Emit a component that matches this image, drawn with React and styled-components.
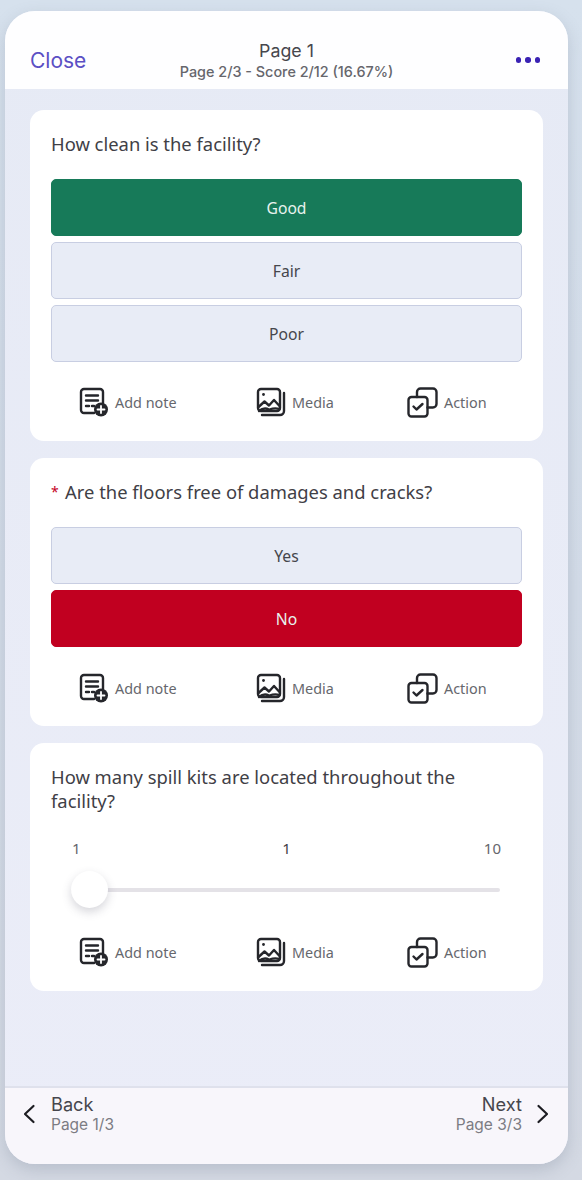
import React from "react";
import styled, { createGlobalStyle } from "styled-components";

const Global = createGlobalStyle`
  html, body { margin: 0; padding: 0; }
  body {
    width: 582px;
    height: 1180px;
    overflow: hidden;
    background: linear-gradient(180deg, #d6e1ed 0%, #d3dce8 50%, #d4d9e3 100%);
    font-family: "Noto Sans", "Open Sans", sans-serif;
  }
`;

const Screen = styled.div`
  box-sizing: border-box;
  width: 582px;
  height: 1180px;
  padding: 11px 14px 16px 5px;
`;
const Phone = styled.div`
  height: 100%;
  border-radius: 30px;
  overflow: hidden;
  display: flex;
  flex-direction: column;
  background: linear-gradient(180deg, #e6eaf5 0%, #ebedf8 100%);
  box-shadow: 0 6px 16px rgba(120, 130, 150, 0.3);
`;
const Header = styled.header`
  box-sizing: border-box;
  height: 78px;
  padding: 22px 25px 0;
  display: grid;
  grid-template-columns: 1fr auto 1fr;
  align-items: start;
  background: #fefeff;
  font-family: Inter, sans-serif;
`;
const Close = styled.span`
  font-size: 21px;
  line-height: 28px;
  margin-top: 14px;
  color: #5b4fc4;
`;
const HeadTitle = styled.div`
  text-align: center;
  margin-top: 8px;
`;
const PageName = styled.div`
  font-size: 17.8px;
  line-height: 20px;
  color: #47474d;
`;
const Score = styled.div`
  font-size: 14.4px;
  line-height: 16px;
  margin-top: 3px;
  font-weight: 500;
  color: #66666c;
`;
const Dots = styled.div`
  justify-self: end;
  display: flex;
  gap: 4px;
  margin-top: 24px;
  margin-right: 3px;
`;
const Dot = styled.i`
  width: 5.5px;
  height: 5.5px;
  border-radius: 50%;
  background: #3a22b4;
`;
const Content = styled.main`
  flex: 1;
  padding: 21px 25px 0;
  display: flex;
  flex-direction: column;
  gap: 17px;
`;
const Card = styled.section`
  box-sizing: border-box;
  height: ${(p) => p.$h}px;
  padding: 22px 21px 0;
  border-radius: 14px;
  background: #fff;
  display: flex;
  flex-direction: column;
`;
const Question = styled.div`
  font-size: 18.4px;
  line-height: 24px;
  height: ${(p) => p.$h || 25}px;
  margin-bottom: ${(p) => p.$gap || 22}px;
  color: #3f4046;
`;
const Star = styled.span`
  display: inline-block;
  width: 14px;
  font-size: 14px;
  vertical-align: 2px;
  color: #c5011f;
`;
const Options = styled.div`
  display: flex;
  flex-direction: column;
  gap: 6px;
`;
const Option = styled.div`
  box-sizing: border-box;
  height: 57px;
  border-radius: 5px;
  display: flex;
  align-items: center;
  justify-content: center;
  font-size: 15.7px;
  color: ${(p) => (p.$bg ? "#e8f3ee" : "#45464c")};
  background: ${(p) => p.$bg || "#e8ecf6"};
  border: 1px solid ${(p) => p.$bg || "#c8cee2"};
`;
const Actions = styled.div`
  display: grid;
  grid-template-columns: 177px 151px auto;
  padding-left: 28px;
  margin-top: ${(p) => p.$top || 22}px;
`;
const ActionItem = styled.div`
  display: flex;
  align-items: center;
  gap: 6px;
  height: 36px;
  font-size: 14.4px;
  color: #66676d;
  svg { flex: none; }
`;
const ScaleLabels = styled.div`
  display: grid;
  grid-template-columns: 1fr auto 1fr;
  padding: 0 21px;
  font-size: 15px;
  line-height: 20px;
  color: #65666c;
`;
const MaxLabel = styled.span`
  text-align: right;
`;
const MidLabel = styled.span`
  color: #3f4046;
`;
const Slider = styled.div`
  position: relative;
  height: 4px;
  margin: 30px 22px 0 20px;
  border-radius: 2px;
  background: #e4e2e7;
`;
const Thumb = styled.div`
  position: absolute;
  left: 0;
  top: -17px;
  width: 37px;
  height: 37px;
  border-radius: 50%;
  background: #fff;
  box-shadow: 0 4px 10px rgba(70, 70, 90, 0.22);
`;
const Footer = styled.footer`
  box-sizing: border-box;
  height: 78px;
  padding: 5px 18px 0 17px;
  display: flex;
  justify-content: space-between;
  border-top: 2px solid #dfe1ec;
  background: #f8f6fb;
  font-family: Inter, sans-serif;
`;
const NavLink = styled.div`
  display: flex;
  align-items: center;
  align-self: flex-start;
  gap: ${(p) => p.$gap}px;
  text-align: ${(p) => p.$align};
`;
const NavTitle = styled.div`
  font-size: 18.2px;
  line-height: 22px;
  color: #46464d;
`;
const NavSub = styled.div`
  font-size: 15.5px;
  line-height: 19px;
  color: #7c7c83;
`;

const NoteIcon = () => (
  <svg width="30" height="30" viewBox="0 0 30 30" fill="none" stroke="#25262b" strokeWidth="2.4" strokeLinecap="round">
    <path d="M15 26H5a3 3 0 0 1-3-3V5a3 3 0 0 1 3-3h16a3 3 0 0 1 3 3v11" />
    <path d="M7 8.5h12M7 13.5h12M7 19h3M13 19h2" />
    <circle cx="22" cy="22.5" r="7" fill="#25262b" stroke="none" />
    <path d="M22 19v7M18.5 22.5h7" stroke="#fff" strokeWidth="1.8" />
  </svg>
);

const MediaIcon = () => (
  <svg width="30" height="30" viewBox="0 0 30 30" fill="none" stroke="#25262b" strokeWidth="2.4" strokeLinejoin="round" strokeLinecap="round">
    <rect x="2" y="2" width="22" height="22" rx="3" />
    <circle cx="7.5" cy="7.5" r="1.4" fill="#25262b" stroke="none" />
    <path d="M2.5 20l6-5.5 4.5 4 5-5.5 5.5 6" />
    <path d="M3 24c3-2.5 6-3.5 10-1.5M23.5 22c-3-1-6-1-10 .5" />
    <path d="M28 6v18a4 4 0 0 1-4 4H6" />
  </svg>
);

const ActionIcon = () => (
  <svg width="31" height="31" viewBox="0 0 31 31" fill="none" stroke="#25262b" strokeWidth="2.4" strokeLinecap="round" strokeLinejoin="round">
    <rect x="1.5" y="10" width="19" height="19.5" rx="3" />
    <path d="M10 10V5a3.5 3.5 0 0 1 3.5-3.5H26A3.5 3.5 0 0 1 29.5 5v12a3.5 3.5 0 0 1-3.5 3.5h-5.5" />
    <path d="M6.5 19.5l3 3 6-5.5" />
  </svg>
);

const Chevron = ({ d }) => (
  <svg width="14" height="22" viewBox="0 0 14 22" fill="none" stroke="#1d1d22" strokeWidth="2.2" strokeLinecap="round" strokeLinejoin="round">
    <path d={d} />
  </svg>
);

const ActionRow = ({ top }) => (
  <Actions $top={top}>
    <ActionItem><NoteIcon />Add note</ActionItem>
    <ActionItem><MediaIcon />Media</ActionItem>
    <ActionItem><ActionIcon />Action</ActionItem>
  </Actions>
);

export default function App() {
  return (
    <>
      <Global />
      <Screen>
        <Phone>
          <Header>
            <Close>Close</Close>
            <HeadTitle>
              <PageName>Page 1</PageName>
              <Score>Page 2/3 - Score 2/12 (16.67%)</Score>
            </HeadTitle>
            <Dots><Dot /><Dot /><Dot /></Dots>
          </Header>
          <Content>
            <Card $h={331}>
              <Question>How clean is the facility?</Question>
              <Options>
                <Option $bg="#177a59">Good</Option>
                <Option>Fair</Option>
                <Option>Poor</Option>
              </Options>
              <ActionRow />
            </Card>
            <Card $h={268}>
              <Question><Star>*</Star>Are the floors free of damages and cracks?</Question>
              <Options>
                <Option>Yes</Option>
                <Option $bg="#c10020">No</Option>
              </Options>
              <ActionRow top={23} />
            </Card>
            <Card $h={248}>
              <Question $h={48} $gap={25}>How many spill kits are located throughout the facility?</Question>
              <ScaleLabels>
                <span>1</span>
                <MidLabel>1</MidLabel>
                <MaxLabel>10</MaxLabel>
              </ScaleLabels>
              <Slider><Thumb /></Slider>
              <ActionRow top={42} />
            </Card>
          </Content>
          <Footer>
            <NavLink $align="left" $gap={15}>
              <Chevron d="M11.5 3L3 11l8.5 8" />
              <div>
                <NavTitle>Back</NavTitle>
                <NavSub>Page 1/3</NavSub>
              </div>
            </NavLink>
            <NavLink $align="right" $gap={14}>
              <div>
                <NavTitle>Next</NavTitle>
                <NavSub>Page 3/3</NavSub>
              </div>
              <Chevron d="M2.5 3L11 11l-8.5 8" />
            </NavLink>
          </Footer>
        </Phone>
      </Screen>
    </>
  );
}
